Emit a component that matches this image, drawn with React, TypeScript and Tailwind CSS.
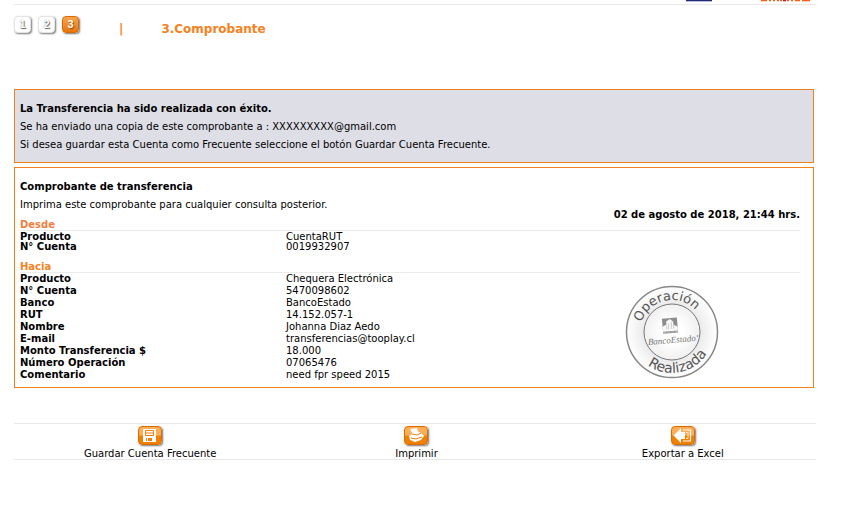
import type { ReactNode } from "react";

const origin: [string, string][] = [
  ["Producto", "CuentaRUT"],
  ["N° Cuenta", "0019932907"],
];

const destination: [string, string][] = [
  ["Producto", "Chequera Electrónica"],
  ["N° Cuenta", "5470098602"],
  ["Banco", "BancoEstado"],
  ["RUT", "14.152.057-1"],
  ["Nombre", "Johanna Diaz Aedo"],
  ["E-mail", "transferencias@tooplay.cl"],
  ["Monto Transferencia $", "18.000"],
  ["Número Operación", "07065476"],
  ["Comentario", "need fpr speed 2015"],
];

function Step({ n, active = false }: { n: number; active?: boolean }) {
  return (
    <li
      aria-current={active ? "step" : undefined}
      className={
        "flex h-[17px] w-[17px] items-center justify-center rounded border text-[11px] leading-none font-bold text-white font-['Liberation_Sans',sans-serif] shadow-[1px_1px_2px_#777] " +
        (active
          ? "border-[#d96a00] bg-linear-to-b from-[#f9a54c] to-[#e87400] [text-shadow:1px_1px_1px_#a04a00]"
          : "border-[#e4e4e4] bg-white [text-shadow:1px_1px_1px_#666,0_0_1px_#777]")
      }
    >
      {n}
    </li>
  );
}

function Rows({ rows, dense = false }: { rows: [string, string][]; dense?: boolean }) {
  return (
    <table className="w-full table-fixed border-collapse">
      <tbody>
        {rows.map(([label, value]) => (
          <tr key={label} className={dense ? "leading-[10px]" : "leading-[12px]"}>
            <th scope="row" className="w-[266px] p-0 text-left font-bold">{label}</th>
            <td className="p-0">{value}</td>
          </tr>
        ))}
      </tbody>
    </table>
  );
}

function Seal() {
  return (
    <svg width="94" height="94" viewBox="0 0 94 94" role="img" aria-label="Operación Realizada">
      <defs>
        <radialGradient id="ring">
          <stop offset="0.58" stopColor="#e8e8e8" />
          <stop offset="0.8" stopColor="#f5f5f5" />
          <stop offset="1" stopColor="#fff" />
        </radialGradient>
        <radialGradient id="core">
          <stop offset="0.4" stopColor="#fff" />
          <stop offset="1" stopColor="#f0f0f0" />
        </radialGradient>
        <path id="upper" d="M15 47 A32 32 0 0 1 79 47" />
        <path id="lower" d="M6 47 A41 41 0 0 0 88 47" />
      </defs>
      <circle cx="47" cy="47" r="45.5" fill="url(#ring)" stroke="#888" strokeWidth="1.5" />
      <circle cx="47" cy="47" r="28" fill="url(#core)" stroke="#777" />
      <g fill="#555" fontFamily="DejaVu Sans, sans-serif">
        <text fontSize="13"><textPath href="#upper" startOffset="43%" textAnchor="middle">Operación</textPath></text>
        <text fontSize="14"><textPath href="#lower" startOffset="56%" textAnchor="middle">Realizada</textPath></text>
      </g>
      <g transform="rotate(-5 46 46)">
        <path d="M38 33h15v15H38z" fill="#8c8c8c" />
        <path d="M38 46v-5l4-2v-3l4-2 3 3v3l4 2v4z" fill="#f8f8f8" />
        <path d="M42 44v-4m2 4v-6m3 6v-7m2 7v-4" stroke="#ccc" />
        <path d="M38 47h15" stroke="#bbb" strokeDasharray="3 1" />
        <text x="46" y="58" textAnchor="middle" fill="#777" fontFamily="Liberation Serif, serif" fontStyle="italic" fontSize="9">BancoEstado</text>
      </g>
      <circle cx="72.5" cy="51" r="0.8" fill="#777" />
    </svg>
  );
}

function Glyph({ children }: { children: ReactNode }) {
  return (
    <span className="flex h-[19px] w-[24px] items-center justify-center rounded border border-[#db6c00] bg-linear-to-b from-[#ffae56] from-45% to-[#f08000] to-55% shadow-[1px_1px_2px_#777]">
      <svg width="22" height="17" viewBox="0 0 22 17" aria-hidden="true">{children}</svg>
    </span>
  );
}

function Action({ label, children }: { label: string; children: ReactNode }) {
  return (
    <div className="flex justify-center">
      <button type="button" className="flex flex-col items-center gap-[3px] leading-[12px]">
        <Glyph>{children}</Glyph>
        {label}
      </button>
    </div>
  );
}

export default function App() {
  return (
    <div className="min-h-screen bg-white pr-[29px] pl-[14px] font-['DejaVu_Sans',Verdana,sans-serif] text-[10px] text-black">
      <header className="flex h-[5px] items-start justify-end border-b border-[#e8e8e8] pr-[2px]">
        <svg width="128" height="2" viewBox="0 0 128 2" aria-hidden="true">
          <path d="M0 0h26v1.300H0z" fill="#202878" />
          <path d="M75 0h6v1.300h-6zM83 0h2v1.300h-2zM87 0h2v1.300h-2zM91 0h2v1.300h-2zM94 0h2v1.300h-2zM101 0h2v1.300h-2zM105 0h2v1.300h-2zM109 0h5v1.300h-5zM116 0h8v1.300h-8z" fill="#ff5a14" />
          <path d="M97 0h3v1.300h-3z" fill="#d3122d" />
        </svg>
      </header>

      <div className="flex h-[84px] items-start pt-[11px]">
        <ol className="flex gap-[7px]">
          <Step n={1} />
          <Step n={2} />
          <Step n={3} active />
        </ol>
        <div className="ml-[40px] flex gap-[38px] pt-[5px] text-[12px] leading-[16px] font-bold text-[#f58220]">
          <span>|</span>
          <h1>3.Comprobante</h1>
        </div>
      </div>

      <main className="mr-[2px] flex flex-col gap-[4px]">
        <section className="border border-[#ef8020] bg-[#dedee7] px-[5px] pt-[10px] pb-[8px] leading-[18px]">
          <p className="font-bold">La Transferencia ha sido realizada con éxito.</p>
          <p>Se ha enviado una copia de este comprobante a : XXXXXXXXX@gmail.com</p>
          <p>Si desea guardar esta Cuenta como Frecuente seleccione el botón Guardar Cuenta Frecuente.</p>
        </section>

        <section className="border border-[#ef8020] pt-[10px] pr-[13px] pb-[6px] pl-[5px]">
          <div className="flex items-end justify-between">
            <div className="leading-[18px]">
              <h2 className="font-bold">Comprobante de transferencia</h2>
              <p>Imprima este comprobante para cualquier consulta posterior.</p>
              <h3 className="pt-[6px] leading-[10px] font-bold text-[#f08040]">Desde</h3>
            </div>
            <time dateTime="2018-08-02T21:44" className="pb-[7px] leading-[16px] font-bold">02 de agosto de 2018, 21:44 hrs.</time>
          </div>
          <div className="border-t border-[#ececec] pt-px">
            <Rows rows={origin} dense />
          </div>
          <h3 className="mt-[10px] border-b border-[#ececec] leading-[10px] font-bold text-[#f58220]">Hacia</h3>
          <div className="flex items-start justify-between">
            <div className="grow"><Rows rows={destination} /></div>
            <div className="mt-[12px] mr-[81px]"><Seal /></div>
          </div>
        </section>
      </main>

      <footer className="mt-[35px] grid h-[37px] grid-cols-3 border-y border-[#e8e8e8] pt-[2px] pl-[3px]">
        <Action label="Guardar Cuenta Frecuente">
          <path d="M4 2h13v13H4z" fill="#fff" />
          <path d="M6.500 3.500h8v5h-8zM6.500 6h8" fill="none" stroke="#ee8010" />
          <path d="M7 11h1v3H7zM9 11h4v3H9z" fill="#ee8010" />
        </Action>
        <Action label="Imprimir">
          <path d="M5 2l7-1 2 5-6 2zM4 9l4-3 7-1 4 4-3 4-6 2-5-2z" fill="#fff" />
          <path d="M7 7l5 1 4-2M6 11l5 1 6-2" stroke="#ee8010" fill="none" />
        </Action>
        <Action label="Exportar a Excel">
          <path d="M11 3h7.500v11H11" stroke="#fff" fill="none" strokeWidth="1.2" />
          <path d="M14 5.500h2v6h-2" stroke="#ffe2c2" fill="none" />
          <path d="M1.500 8.500L9 1v4h4v7H9v4z" fill="#fff" />
        </Action>
      </footer>
    </div>
  );
}
